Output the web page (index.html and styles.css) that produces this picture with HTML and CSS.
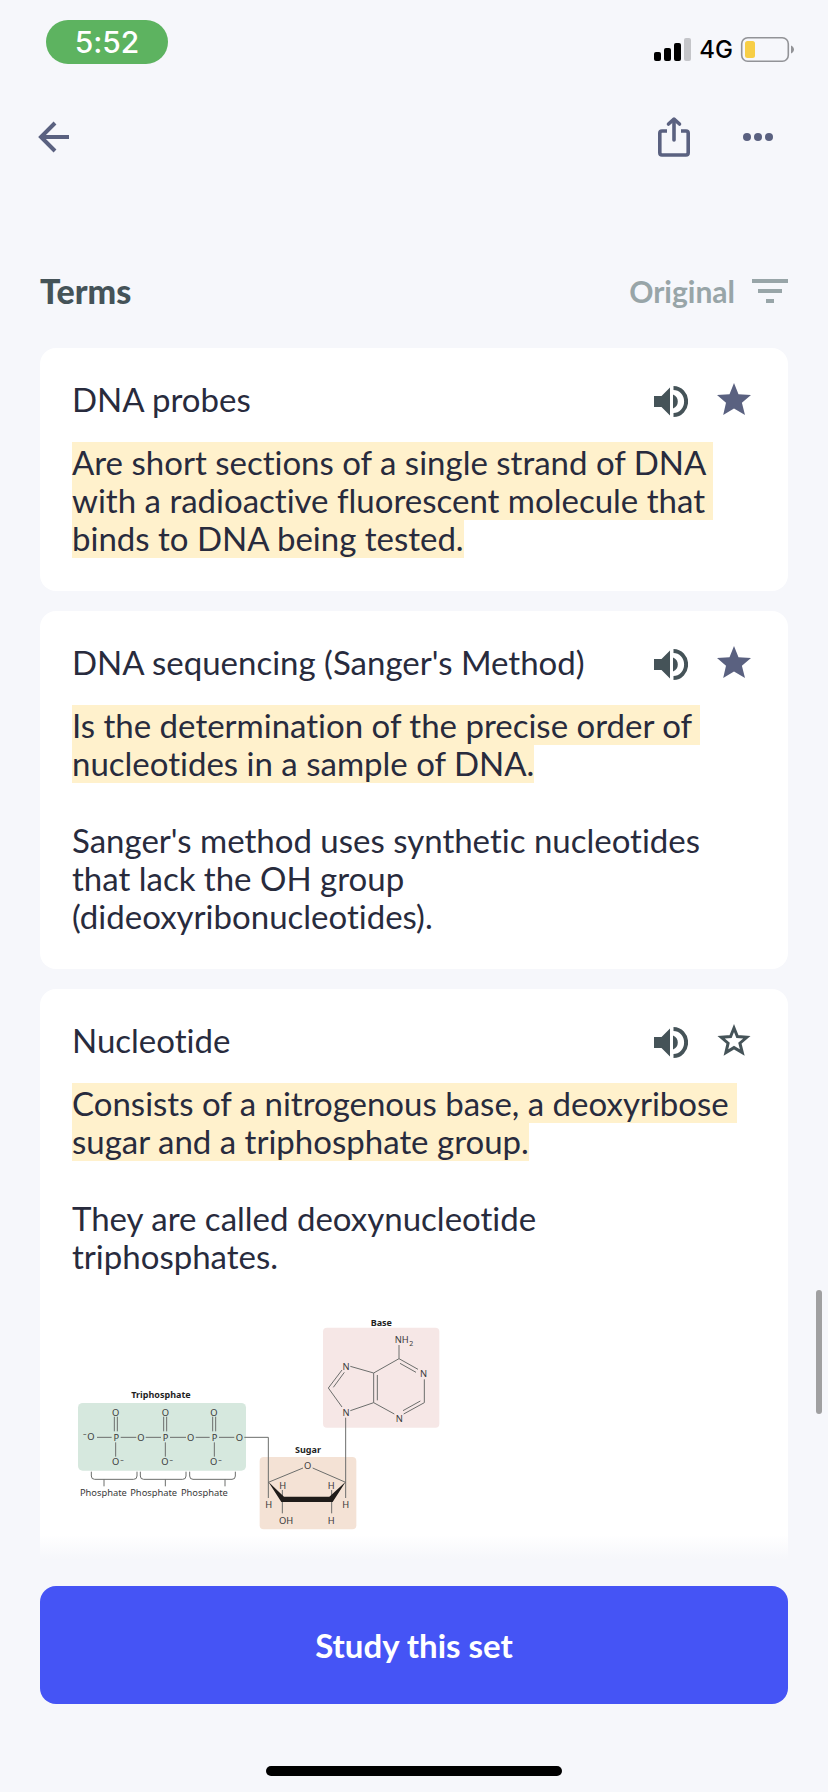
FILE: index.html
```html
<!DOCTYPE html>
<html lang="en">
<head>
<meta charset="utf-8">
<meta name="viewport" content="width=device-width, initial-scale=1">
<title>Terms</title>
<link rel="stylesheet" href="styles.css">
</head>
<body>
<svg class="defs" aria-hidden="true">
  <symbol id="i-speaker" viewBox="0 0 36 36">
    <path fill="currentColor" d="M2 15H9.500L18 6.500V34.500L9.500 26H2ZM21 13.500A7.500 7.500 0 0 1 21 27.500Z"/>
    <path fill="none" stroke="currentColor" stroke-width="4" d="M21.500 7A12.600 13.500 0 0 1 21.500 34"/>
  </symbol>
  <symbol id="i-star" viewBox="0 0 36 36">
    <path fill="currentColor" d="M18 2L22.500 13.200L35 14L25.900 21.700L29 34L18 27.400L7.200 34L10 21.700L1 14L13.500 13.200Z"/>
  </symbol>
  <symbol id="i-star-outline" viewBox="0 0 36 36">
    <path fill="none" stroke="currentColor" stroke-width="3" stroke-miterlimit="10" d="M18 6L21.400 14.600L30.800 15.300L23.900 21.200L26.300 30.600L18 25.600L9.900 30.600L12.100 21.200L5.200 15.300L14.600 14.600Z"/>
  </symbol>
</svg>
<div class="screen">
  <div class="status">
    <span class="status-time">5:52</span>
    <div class="status-right">
      <svg width="38" height="28" viewBox="0 0 38 28" aria-hidden="true">
        <rect x="0" y="16" width="7" height="9" rx="2"/>
        <rect x="10" y="12" width="7" height="13" rx="2"/>
        <rect x="20" y="7" width="7" height="18" rx="2"/>
        <rect x="30" y="2" width="7" height="23" rx="2" fill="#c4c5c9"/>
      </svg>
      <span class="network">4G</span>
      <svg width="54" height="28" viewBox="0 0 54 28" aria-hidden="true">
        <rect x="1.700" y="1.700" width="46.600" height="23.600" rx="6" fill="none" stroke="#929397" stroke-width="1.600"/>
        <rect x="5" y="5" width="10" height="17" rx="2.500" fill="#f7ce46"/>
        <path d="M51 9.500C55 11.500 55 15.500 51 17.500Z" fill="#929397"/>
      </svg>
    </div>
  </div>
  <nav class="toolbar">
    <button class="icon-btn" aria-label="Back">
      <svg width="32" height="32" viewBox="0 0 32 32"><path d="M31 16H4M17 2L3 16L17 30" fill="none" stroke="currentColor" stroke-width="4"/></svg>
    </button>
    <div class="toolbar-actions">
      <button class="icon-btn" aria-label="Share">
        <svg width="32" height="42" viewBox="0 0 32 42"><g fill="none" stroke="currentColor" stroke-width="3.600"><path d="M9 15H4Q1.800 15 1.800 17V36.500Q1.800 39 4 39H28Q30.200 39 30.200 36.500V17Q30.200 15 28 15H23"/><path d="M16 24V4" stroke-linecap="round"/><path d="M10.500 8L16 3.200L21.500 8" stroke-linecap="round" stroke-linejoin="round"/></g></svg>
      </button>
      <button class="icon-btn" aria-label="More">
        <svg width="32" height="10" viewBox="0 0 32 10" fill="currentColor"><circle cx="5" cy="5" r="4"/><circle cx="16" cy="5" r="4"/><circle cx="27" cy="5" r="4"/></svg>
      </button>
    </div>
  </nav>
  <main class="content">
    <header class="section-head">
      <h1 class="section-title">Terms</h1>
      <button class="sort">Original
        <svg width="36" height="24" viewBox="0 0 36 24" fill="currentColor" aria-hidden="true"><path d="M0 0H36V4H0ZM6 10H30V14H6ZM14 20H22V24H14Z"/></svg>
      </button>
    </header>
    <article class="card">
      <div class="card-head">
        <h2 class="term">DNA probes</h2>
        <button class="icon-btn" aria-label="Listen"><svg width="36" height="36"><use href="#i-speaker"/></svg></button>
        <button class="icon-btn starred" aria-label="Unstar"><svg width="36" height="36"><use href="#i-star"/></svg></button>
      </div>
      <p class="definition"><mark><span class="ink">Are short sections of a single strand of DNA with a radioactive fluorescent molecule that binds to DNA being tested.</span></mark></p>
    </article>
    <article class="card">
      <div class="card-head">
        <h2 class="term">DNA sequencing (Sanger's Method)</h2>
        <button class="icon-btn" aria-label="Listen"><svg width="36" height="36"><use href="#i-speaker"/></svg></button>
        <button class="icon-btn starred" aria-label="Unstar"><svg width="36" height="36"><use href="#i-star"/></svg></button>
      </div>
      <p class="definition"><mark><span class="ink">Is the determination of the precise order of nucleotides in a sample of DNA.</span></mark></p>
      <p class="definition">Sanger's method uses synthetic nucleotides that lack the OH group<br>(dideoxyribonucleotides).</p>
    </article>
    <article class="card">
      <div class="card-head">
        <h2 class="term">Nucleotide</h2>
        <button class="icon-btn" aria-label="Listen"><svg width="36" height="36"><use href="#i-speaker"/></svg></button>
        <button class="icon-btn" aria-label="Star"><svg width="36" height="36"><use href="#i-star-outline"/></svg></button>
      </div>
      <p class="definition"><mark><span class="ink">Consists of a nitrogenous base, a deoxyribose sugar and a triphosphate group.</span></mark></p>
      <p class="definition">They are called deoxynucleotide<br>triphosphates.</p>
      <svg class="diagram" width="372" height="226" viewBox="36 30 1116 678" role="img" aria-label="Structure of a deoxynucleotide triphosphate">
        <rect x="54" y="309" width="504" height="203" rx="14" fill="#d6e8de"/>
        <rect x="789" y="83" width="349" height="300" rx="12" fill="#f6e7e6"/>
        <rect x="599" y="471" width="290" height="217" rx="12" fill="#f4e2d5"/>
        <g fill="none" stroke="#6c6e6c" stroke-width="3">
          <path d="M111 412H155M182 412H229M257 412H303M330 412H378M407 412H449M477 412H523M553 412H625V594"/>
          <path d="M163 350V394M172 350V394M167 427V470M311 350V394M320 350V394M316 427V470M458 350V394M467 350V394M463 427V470"/>
          <path d="M94 515V528Q94 538 104 538H221Q231 538 231 528V515M132 538V559M241 515V528Q241 538 251 538H368Q378 538 378 528V515M316 538V559M389 515V528Q389 538 399 538H516Q526 538 526 528V515M495 538V559"/>
          <path d="M1017 135V176L941 219L871 199M846 210L805 264L846 321M853 217L820 262M871 332L941 308L1003 342M941 219V308M952 225V301M1017 176L1074 208M1020 190L1068 217M1093 238V308L1031 342M1081 303L1029 332M857 353V594"/>
          <path d="M625 547L729 504M758 504L857 547M667 570V640M815 570V640"/>
        </g>
        <path d="M625 545L672 590H808L857 545L818 606H664Z" fill="#1f1c1a"/>
        <g class="atom">
          <text x="167" y="347">O</text><text x="316" y="347">O</text><text x="462" y="347">O</text>
          <text x="93" y="419">O</text><text class="sub" x="74" y="408">–</text>
          <text x="169" y="423">P</text><text x="243" y="423">O</text><text x="317" y="423">P</text><text x="392" y="423">O</text><text x="464" y="423">P</text><text x="538" y="423">O</text>
          <text x="167" y="496">O</text><text class="sub" x="186" y="485">–</text><text x="315" y="496">O</text><text class="sub" x="334" y="485">–</text><text x="461" y="496">O</text><text class="sub" x="480" y="485">–</text>
          <text x="130" y="587">Phosphate</text><text x="281" y="587">Phosphate</text><text x="433" y="587">Phosphate</text>
          <text x="1025" y="129">NH</text><text class="sub" x="1054" y="138">2</text>
          <text x="858" y="209">N</text><text x="1091" y="230">N</text><text x="858" y="347">N</text><text x="1018" y="365">N</text>
          <text x="743" y="507">O</text>
          <text x="668" y="566">H</text><text x="814" y="566">H</text><text x="626" y="625">H</text><text x="857" y="625">H</text><text x="678" y="672">OH</text><text x="814" y="672">H</text>
        </g>
        <g class="part">
          <text x="303" y="295">Triphosphate</text><text x="964" y="77">Base</text><text x="744" y="459">Sugar</text>
        </g>
      </svg>
    </article>
  </main>
  <footer class="footer">
    <button class="study">Study this set</button>
    <div class="home-indicator"></div>
  </footer>
  <div class="scroll-thumb"></div>
</div>
</body>
</html>
```

FILE: styles.css
```css
* { box-sizing: border-box; }

body {
  margin: 0;
  background: #f6f7fb;
  color: #282b3d;
  font-family: Lato, "Open Sans", sans-serif;
  font-size: 33px;
  font-variant-ligatures: none;
  line-height: 38px;
}

h1, h2, p { margin: 0; font-size: inherit; font-weight: 400; }

button {
  padding: 0;
  border: 0;
  background: none;
  color: inherit;
  font: inherit;
}

svg { display: block; flex: none; }

.defs { position: absolute; width: 0; height: 0; }

.screen {
  position: relative;
  display: flex;
  flex-direction: column;
  height: 100vh;
  overflow: hidden;
}

.status {
  display: flex;
  justify-content: space-between;
  align-items: flex-end;
  height: 64px;
  padding: 0 34px 0 46px;
  font-family: Inter, sans-serif;
  flex: none;
}

.status-time {
  width: 122px;
  border-radius: 22px;
  background: #5db360;
  color: #fff;
  font-size: 30px;
  font-weight: 500;
  line-height: 44px;
  text-align: center;
}

.status-right { display: flex; align-items: center; gap: 7px; }

.network {
  color: #000;
  font-size: 24px;
  font-weight: 500;
  line-height: 28px;
}

.toolbar {
  display: flex;
  justify-content: space-between;
  align-items: center;
  height: 98px;
  margin-top: 24px;
  padding: 0 54px 0 38px;
  color: #5a6180;
  flex: none;
}

.toolbar-actions { display: flex; align-items: center; gap: 52px; }

.content {
  flex: 1;
  min-height: 0;
  overflow: hidden;
  padding: 80px 40px 0;
}

.section-head {
  display: flex;
  justify-content: space-between;
  align-items: center;
  height: 50px;
  margin-bottom: 32px;
}

.section-title { color: #455358; font-size: 34px; font-weight: 900; }

.sort {
  display: flex;
  align-items: center;
  gap: 17px;
  color: #98a5a8;
  font-size: 30px;
  font-weight: 700;
}

.card {
  margin-bottom: 20px;
  padding: 32px 32px 34px;
  border-radius: 16px;
  background: #fff;
}

.card-head {
  display: flex;
  align-items: center;
  gap: 28px;
  margin-bottom: 25px;
  padding-right: 4px;
  color: #455358;
}

.term { flex: 1; color: #282b3d; }

.starred { color: #5a6180; }

.icon-btn { flex: none; }

.definition { white-space: break-spaces; }

.definition + .definition { margin-top: 39px; }

mark { background: #fff1cc; color: inherit; }

/* Keeps descenders above the next line's highlight */
.ink { position: relative; }

.diagram { margin: 35px 0 24px; }

.atom, .part {
  fill: #3a3a3a;
  font-family: "Noto Sans", sans-serif;
  font-size: 28px;
  text-anchor: middle;
}

.part { fill: #1f1f1f; font-size: 27px; font-weight: 700; }

.sub { font-size: 21px; }

.footer {
  position: relative;
  flex: none;
  padding: 21px 40px 16px;
}

.footer::before {
  content: "";
  position: absolute;
  right: 0;
  bottom: 100%;
  left: 0;
  height: 30px;
  background: linear-gradient(rgba(246, 247, 251, 0), #f6f7fb 80%);
}

.study {
  display: block;
  width: 100%;
  border-radius: 16px;
  background: #4554f5;
  color: #fff;
  font-weight: 700;
  line-height: 118px;
}

.home-indicator {
  width: 296px;
  height: 10px;
  margin: 62px auto 0;
  border-radius: 5px;
  background: #000;
}

.scroll-thumb {
  position: absolute;
  top: 1290px;
  right: 6px;
  width: 6px;
  height: 124px;
  border-radius: 3px;
  background: #a0a0a1;
}
```
